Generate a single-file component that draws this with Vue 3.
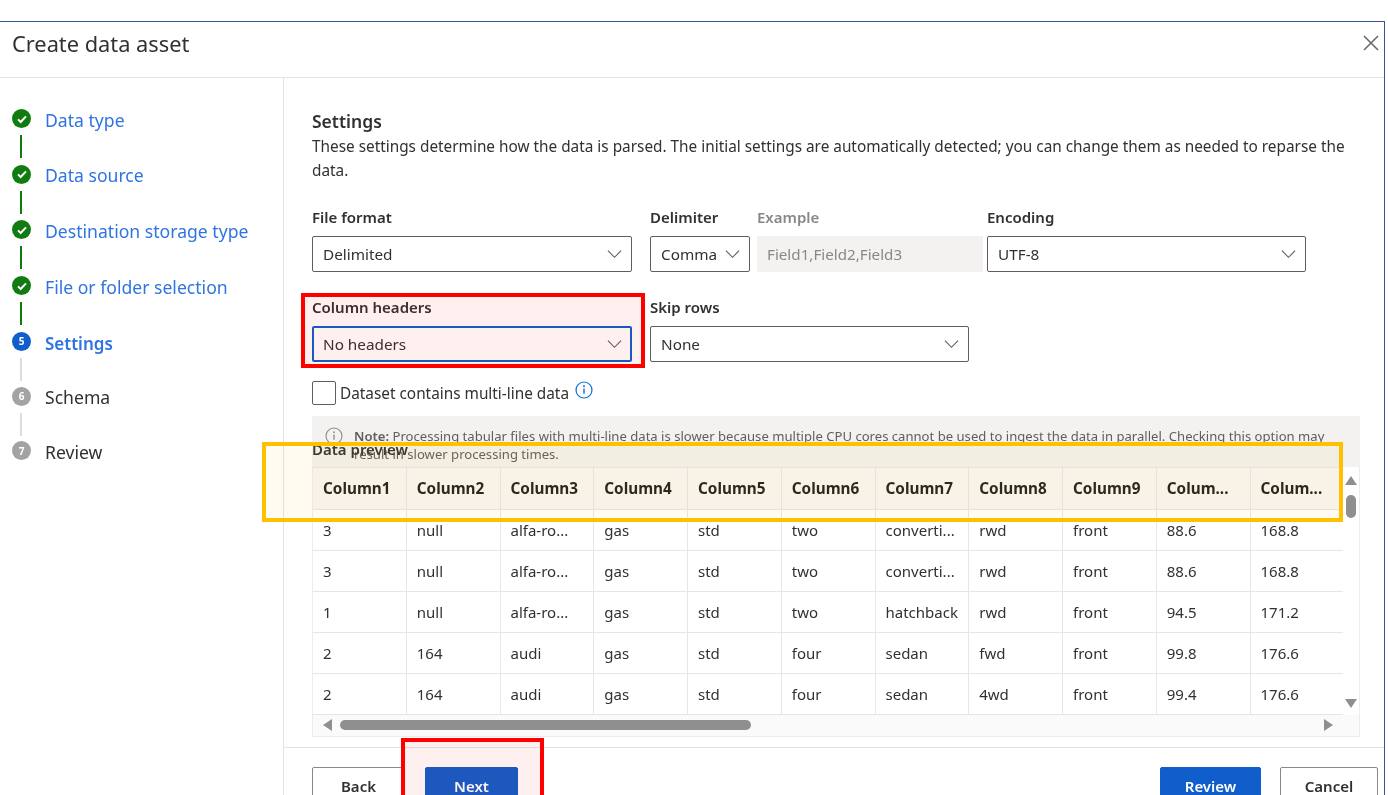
<script setup>
const steps = [
  { label: 'Data type', state: 'done' },
  { label: 'Data source', state: 'done' },
  { label: 'Destination storage type', state: 'done' },
  { label: 'File or folder selection', state: 'done' },
  { label: 'Settings', state: 'active', n: 5 },
  { label: 'Schema', state: 'todo', n: 6 },
  { label: 'Review', state: 'todo', n: 7 },
]
const headers = ['Column1','Column2','Column3','Column4','Column5','Column6','Column7','Column8','Column9','Colum...','Colum...']
const rows = [
  ['3','null','alfa-ro...','gas','std','two','converti...','rwd','front','88.6','168.8'],
  ['3','null','alfa-ro...','gas','std','two','converti...','rwd','front','88.6','168.8'],
  ['1','null','alfa-ro...','gas','std','two','hatchback','rwd','front','94.5','171.2'],
  ['2','164','audi','gas','std','four','sedan','fwd','front','99.8','176.6'],
  ['2','164','audi','gas','std','four','sedan','4wd','front','99.4','176.6'],
]
</script>

<template>
  <div class="page">
    <div class="dialog">
      <header class="head">
        <h1>Create data asset</h1>
        <svg class="close" width="18" height="18" viewBox="0 0 18 18"><path d="M2 2l14 14M16 2L2 16" stroke="#666" stroke-width="1.5" fill="none"/></svg>
      </header>
      <div class="body">
        <nav class="side">
          <div v-for="(s, i) in steps" :key="s.label" class="step" :class="s.state">
            <div class="step-row">
              <span class="dot">
                <svg v-if="s.state === 'done'" width="12" height="12" viewBox="0 0 12 12"><path d="M2 6.4l2.7 2.6L10 3.4" stroke="#fff" stroke-width="2" fill="none"/></svg>
                <template v-else>{{ s.n }}</template>
              </span>
              <span class="step-label">{{ s.label }}</span>
            </div>
            <div v-if="i < steps.length - 1" class="line"></div>
          </div>
        </nav>
        <main class="main">
          <div class="content">
            <h2>Settings</h2>
            <p class="desc">These settings determine how the data is parsed. The initial settings are automatically detected; you can change them as needed to reparse the data.</p>
            <div class="fields r1">
              <div class="field w320">
                <label>File format</label>
                <div class="select"><span>Delimited</span><svg class="chev" width="15" height="10" viewBox="0 0 16 10"><path d="M1 1.5l7 7 7-7" stroke="#605e5c" stroke-width="1.2" fill="none"/></svg></div>
              </div>
              <div class="field w100">
                <label>Delimiter</label>
                <div class="select"><span>Comma</span><svg class="chev" width="15" height="10" viewBox="0 0 16 10"><path d="M1 1.5l7 7 7-7" stroke="#605e5c" stroke-width="1.2" fill="none"/></svg></div>
              </div>
              <div class="field w226">
                <label class="muted">Example</label>
                <div class="example">Field1,Field2,Field3</div>
              </div>
              <div class="field w319">
                <label>Encoding</label>
                <div class="select"><span>UTF-8</span><svg class="chev" width="15" height="10" viewBox="0 0 16 10"><path d="M1 1.5l7 7 7-7" stroke="#605e5c" stroke-width="1.2" fill="none"/></svg></div>
              </div>
            </div>
            <div class="fields r2">
              <div class="field w320">
                <label>Column headers</label>
                <div class="select focus"><span>No headers</span><svg class="chev" width="15" height="10" viewBox="0 0 16 10"><path d="M1 1.5l7 7 7-7" stroke="#605e5c" stroke-width="1.2" fill="none"/></svg></div>
              </div>
              <div class="field w319">
                <label>Skip rows</label>
                <div class="select"><span>None</span><svg class="chev" width="15" height="10" viewBox="0 0 16 10"><path d="M1 1.5l7 7 7-7" stroke="#605e5c" stroke-width="1.2" fill="none"/></svg></div>
              </div>
            </div>
            <div class="check">
              <span class="box"></span>
              <span>Dataset contains multi-line data</span>
              <svg class="info" width="18" height="18" viewBox="0 0 18 18"><circle cx="9" cy="9" r="8" stroke="#0f6cdb" stroke-width="1.2" fill="none"/><path d="M9 7.6v5.2" stroke="#0f6cdb" stroke-width="1.4"/><circle cx="9" cy="5.2" r="1" fill="#0f6cdb"/></svg>
            </div>
            <div class="note">
              <svg class="note-i" width="18" height="18" viewBox="0 0 18 18"><circle cx="9" cy="9" r="8" stroke="#8a8886" stroke-width="1.1" fill="none"/><path d="M9 7.6v5.2" stroke="#8a8886" stroke-width="1.3"/><circle cx="9" cy="5.2" r=".9" fill="#8a8886"/></svg>
              <p><b>Note:</b> Processing tabular files with multi-line data is slower because multiple CPU cores cannot be used to ingest the data in parallel. Checking this option may result in slower processing times.</p>
            </div>
            <div class="preview-title">Data preview</div>
            <div class="table-wrap">
              <div class="table-top">
                <div class="table">
                  <div class="tr th">
                    <div v-for="(h, i) in headers" :key="i" class="td">{{ h }}</div>
                  </div>
                  <div v-for="(r, ri) in rows" :key="ri" class="tr">
                    <div v-for="(c, ci) in r" :key="ci" class="td">{{ c }}</div>
                  </div>
                  <div class="tr stub"><div v-for="(h, i) in headers" :key="i" class="td"></div></div>
                </div>
                <div class="vbar">
                  <svg width="12" height="9" viewBox="0 0 12 9"><path d="M6 0l6 9H0z" fill="#8f8f8f"/></svg>
                  <div class="vthumb"></div>
                  <svg class="down" width="12" height="9" viewBox="0 0 12 9"><path d="M6 9l6-9H0z" fill="#8f8f8f"/></svg>
                </div>
              </div>
              <div class="hbar">
                <svg width="9" height="12" viewBox="0 0 9 12"><path d="M0 6l9-6v12z" fill="#8f8f8f"/></svg>
                <div class="hthumb"></div>
                <svg class="right" width="9" height="12" viewBox="0 0 9 12"><path d="M9 6L0 0v12z" fill="#8f8f8f"/></svg>
              </div>
            </div>
          </div>
          <footer class="foot">
            <button class="btn w93">Back</button>
            <button class="btn primary w93 nxt">Next</button>
            <span class="grow"></span>
            <button class="btn primary w101">Review</button>
            <button class="btn w98">Cancel</button>
          </footer>
        </main>
      </div>
    </div>
    <div class="mark red-a"></div>
    <div class="mark red-b"></div>
    <div class="mark yellow"></div>
  </div>
</template>

<style>
html, body { margin: 0; overflow: hidden; background: #fff; }
</style>

<style scoped>
.page { position: relative; width: 1388px; height: 795px; overflow: hidden; background: #fff; font-family: "Noto Sans", "Open Sans", sans-serif; color: #323130; padding-top: 21px; box-sizing: border-box; filter: blur(.35px); }
.dialog { width: 1385px; height: 774px; box-sizing: border-box; border-top: 1.5px solid #2f5597; border-right: 1.5px solid #2f5597; display: flex; flex-direction: column; }
.head { height: 56px; flex: none; box-sizing: border-box; display: flex; align-items: center; justify-content: space-between; padding: 0 4px 11px 12px; border-bottom: 1.5px solid #e3e3e3; }
h1 { margin: 0 0 2px; font-size: 21.8px; font-weight: 400; }
.close { margin-bottom: 2px; }
.body { flex: 1; display: flex; min-height: 0; }
.side { width: 284px; flex: none; box-sizing: border-box; border-right: 1.5px solid #e3e3e3; padding: 31px 0 0 12px; }
.step-row { display: flex; align-items: center; height: 19px; gap: 14px; }
.dot { width: 19px; height: 19px; border-radius: 50%; display: flex; align-items: center; justify-content: center; font-size: 10px; font-weight: 700; color: #fff; flex: none; }
.done .dot { background: #107c10; }
.active .dot { background: #0f5ecb; }
.todo .dot { background: #a3a3a3; }
.step-label { font-size: 17.6px; color: #2f74e0; white-space: nowrap; margin-top: 2px; }
.active .step-label { font-weight: 600; font-size: 17px; margin-top: 4px; }
.todo .step-label { color: #323130; }
.line { width: 2px; height: 23px; margin: 7px 0 6.7px 8px; background: #107c10; }
.active .line { background: #dcdcdc; margin-bottom: 6px; }
.todo .line { background: #dcdcdc; margin-bottom: 5.4px; }
.main { flex: 1; min-width: 0; display: flex; flex-direction: column; }
.content { height: 668.5px; flex: none; box-sizing: border-box; padding: 30.5px 24px 0 28px; }
h2 { margin: 0; font-size: 17.5px; font-weight: 600; line-height: 24px; }
.desc { margin: 1px 0 0; font-size: 15.35px; line-height: 24px; width: 1046px; }
.fields { display: flex; }
.r1 { margin-top: 23px; }
.r2 { margin-top: 23px; }
.field { flex: none; box-sizing: border-box; }
.w320 { width: 320px; margin-right: 18px; }
.w100 { width: 100px; margin-right: 7px; }
.w226 { width: 226px; margin-right: 4px; }
.w319 { width: 319px; }
label { display: block; font-size: 15px; font-weight: 600; line-height: 24px; margin-bottom: 7px; }
.muted { color: #8a8886; }
.select { height: 36px; box-sizing: border-box; border: 1.2px solid #605e5c; border-radius: 2px; display: flex; align-items: center; justify-content: space-between; padding: 0 9px 0 10px; font-size: 15.3px; }
.focus { border: 2px solid #0f5ecb; padding-left: 9px; padding-right: 8px; }
.example { height: 36px; background: #f3f2f1; color: #8a8886; display: flex; align-items: center; padding-left: 10px; font-size: 15.2px; }
.check { display: flex; align-items: center; margin-top: 19px; height: 24px; font-size: 15.35px; }
.box { width: 22px; height: 22px; border: 1.2px solid #605e5c; border-radius: 2px; margin-right: 4px; flex: none; }
.info { margin: -5px 0 0 6px; }
.note { margin-top: 11px; height: 54px; background: #f3f2f1; box-sizing: border-box; padding: 11px 16px 0 13px; display: flex; color: #605e5c; font-size: 13.1px; line-height: 18px; }
.note-i { flex: none; margin: 0 11px 0 0; }
.note p { margin: 0; }
.note b { font-weight: 600; }
.preview-title { position: relative; font-size: 15px; font-weight: 600; line-height: 20px; height: 20px; margin-top: -31px; margin-bottom: 8px; }
.table-wrap { width: 1048px; height: 270px; box-sizing: border-box; background: #fff; border: 1px solid #ececec; border-top: 0; position: relative; display: flex; flex-direction: column; }
.table-top { display: flex; height: 248px; overflow: hidden; flex: none; }
.table { width: 1030px; flex: none; overflow: hidden; }
.tr { display: flex; height: 41px; box-sizing: border-box; border-bottom: 1.5px solid #e6e6e6; }
.td { width: 93.75px; flex: none; box-sizing: border-box; padding: 0 0 0 10px; border-right: 1.5px solid #e6e6e6; font-size: 15px; line-height: 41px; white-space: nowrap; overflow: hidden; }
.th { height: 43px; border-top: 1.5px solid #e6e6e6; background: #f8f7f5; }
.th .td { font-weight: 700; font-size: 15.3px; color: #201f1e; line-height: 41px; }
.stub { height: 10px; border-bottom: 0; }
.vbar { flex: 1; position: relative; display: flex; flex-direction: column; align-items: center; padding-top: 9.5px; background: #fff; }
.vthumb { width: 10px; height: 23px; border-radius: 5px; background: #8f8f8f; margin-top: 9.5px; }
.down { margin-top: auto; margin-bottom: 6.5px; }
.hbar { flex: 1; display: flex; align-items: center; padding: 0 26px 0 10px; background: #fafafa; }
.hthumb { width: 411px; height: 10px; border-radius: 5px; background: #8f8f8f; margin-left: 8px; }
.right { margin-left: auto; }
.foot { display: flex; flex: 1; border-top: 1.5px solid #e3e3e3; padding: 19.5px 6px 0 28px; box-sizing: border-box; gap: 19px; align-items: flex-start; }
.grow { flex: 1; }
.btn { height: 38px; box-sizing: border-box; border: 1.2px solid #8a8886; border-radius: 2px; background: #fff; color: #323130; font: 600 15px "Noto Sans", sans-serif; padding: 0; }
.primary { background: #0f5ecb; border-color: #0f5ecb; color: #fff; }
.w93 { width: 93px; }
.w101 { width: 101px; }
.w98 { width: 98px; }
.nxt { margin-left: 1px; }
.mark { position: absolute; box-sizing: border-box; border-style: solid; pointer-events: none; }
.red-a { left: 301px; top: 293px; width: 344px; height: 75px; border: 4px solid #f00; background: rgba(255,0,0,.06); }
.red-b { left: 401px; top: 738px; width: 143px; height: 70px; border: 4px solid #f00; background: rgba(255,0,0,.06); }
.yellow { left: 262px; top: 442px; width: 1081px; height: 80px; border: 4px solid #ffc000; background: rgba(255,192,0,.06); }
</style>
